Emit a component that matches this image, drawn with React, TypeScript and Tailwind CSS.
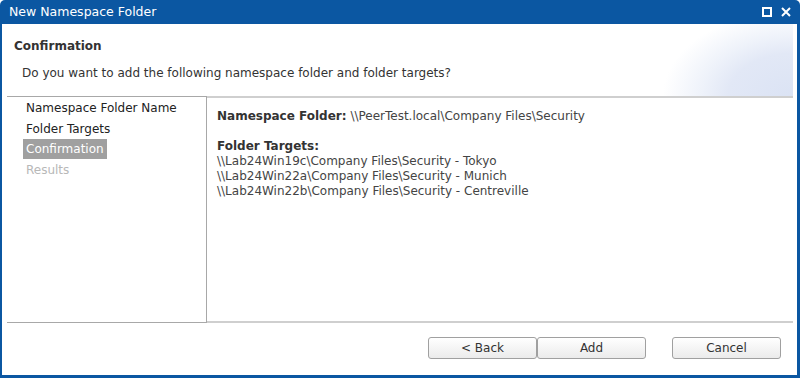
import React from "react";

export default function App() {
  const font = { fontFamily: '"DejaVu Sans", Verdana, sans-serif' };
  return (
    <div
      className="w-[800px] h-[378px] bg-[#0b57a2] rounded-t-[5px] flex flex-col overflow-hidden"
      style={font}
    >
      <div className="h-[24px] flex items-center justify-between pl-[9px] pr-[9px] text-white text-[12.5px]">
        <span>New Namespace Folder</span>
        <div className="flex items-center gap-[9px]">
          <svg width="10" height="10" viewBox="0 0 10 10">
            <rect x="1" y="1" width="8" height="8" fill="none" stroke="white" strokeWidth="2" />
          </svg>
          <svg width="10" height="10" viewBox="0 0 10 10">
            <path d="M1 1 L9 9 M9 1 L1 9" stroke="white" strokeWidth="2" />
          </svg>
        </div>
      </div>
      <div className="flex-1 ml-[2px] mr-[3px] mb-[3px] bg-white flex flex-col">
        <div className="h-[72px] relative flex flex-col mr-[4px] bg-[radial-gradient(ellipse_130px_85px_at_100%_100%,#dbe3f4_0%,#e2e8f6_50%,#eef2fa_70%,rgba(255,255,255,0)_100%)]">
          <div className="pl-[12px] pt-[13px] text-[12px] font-bold text-[#333]">Confirmation</div>
          <div className="pl-[20px] pt-[9px] text-[12px] text-[#333]">
            Do you want to add the following namespace folder and folder targets?
          </div>
        </div>
        <div className="flex ml-[5px] mr-[4px] h-[227px]">
          <div className="w-[200px] border-t border-b border-r border-[#a8a8a8] flex flex-col pl-[16px] text-[12px]">
            <div className="h-[21px] flex items-center pl-[3px] text-[#222]">Namespace Folder Name</div>
            <div className="h-[21px] flex items-center pl-[3px] text-[#222]">Folder Targets</div>
            <div className="h-[20px] flex items-center px-[3px] bg-[#a0a0a0] text-white self-start">Confirmation</div>
            <div className="h-[21px] flex items-center pl-[3px] text-[#b8b8b8]">Results</div>
          </div>
          <div className="flex-1 border-t-2 border-b-2 border-[#cfcfcf] pl-[10px] pt-[11px] text-[12px] text-[#444] leading-[15px]">
            <div>
              <span className="font-bold text-[#333]">Namespace Folder:</span> \\PeerTest.local\Company Files\Security
            </div>
            <div className="mt-[15px] font-bold text-[#333]">Folder Targets:</div>
            <div>\\Lab24Win19c\Company Files\Security - Tokyo</div>
            <div>\\Lab24Win22a\Company Files\Security - Munich</div>
            <div>\\Lab24Win22b\Company Files\Security - Centreville</div>
          </div>
        </div>
        <div className="flex justify-end pt-[14px] pr-[16px] text-[12px] text-[#333]">
          <button className="w-[109px] h-[22px] border border-[#a0a0a0] rounded-[3px] bg-[linear-gradient(#ffffff,#ebebeb)]">
            &lt; Back
          </button>
          <button className="w-[109px] h-[22px] border border-[#a0a0a0] rounded-[3px] bg-[linear-gradient(#ffffff,#ebebeb)]">
            Add
          </button>
          <button className="ml-[26px] w-[109px] h-[22px] border border-[#a0a0a0] rounded-[3px] bg-[linear-gradient(#ffffff,#ebebeb)]">
            Cancel
          </button>
        </div>
      </div>
    </div>
  );
}
